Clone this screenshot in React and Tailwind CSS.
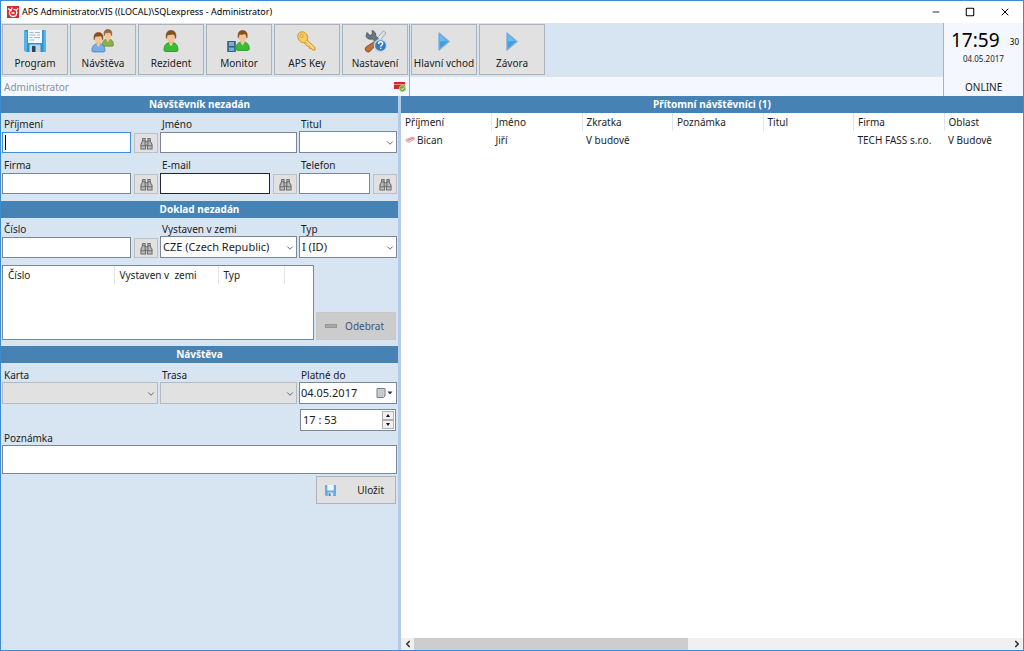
import React, { useState } from 'react';
import { ChevronDown, ChevronLeft, ChevronRight, Minus, Square, X } from 'lucide-react';

const FloppyIcon = ({ className }) => (
  <svg viewBox="0 0 22 22" className={className}>
    <path d="M0 1.5Q0 0 1.5 0h19Q22 0 22 1.500V22H2L0 20Z" fill="#2f93d3" />
    <path d="M0 1.500h3V22H2L0 20ZM19.500 0H22V22h-2.500Z" fill="#55b4e6" />
    <path d="M4 0h14v13H4Z" fill="#f4fafd" />
    <path d="M5.500 2.500h4M11 2.500h5M5.500 5h6M13 5h3M5.500 7.500h3M10 7.500h6M5.500 10h5" stroke="#a4b3bf" />
    <path d="M5.500 14.500h11V22h-11Z" fill="#c9d3db" />
    <path d="M8 16h3.500v6H8Z" fill="#2c4660" />
  </svg>
);

const SmallFloppyIcon = ({ className }) => (
  <svg viewBox="0 0 12 12" className={className}>
    <path d="M0 0h12v12H1l-1-1Z" fill="#62aee0" />
    <path d="M2.500 0h7v6h-7Z" fill="#eef7fc" />
    <path d="M3 8h6v4H3Z" fill="#d4e2ec" />
    <path d="M4 9h2v3H4Z" fill="#4682ae" />
  </svg>
);

const Person = ({ shirt, edge, hair = '#87501f' }) => (
  <>
    <path d="M1 20c0-5 2.500-7.500 7-7.500s7 2.500 7 7.500q0 1.500-2 1.500H3Q1 21.500 1 20Z" fill={shirt} stroke={edge} strokeWidth="0.8" />
    <path d="m5.500 12.500 2.500 4 2.500-4Z" fill="#f4c99b" />
    <ellipse cx="8" cy="7.500" rx="4" ry="5.300" fill="#f3c596" />
    <path d="M3.400 8.500C2.500 3 4.500.5 8 .5s5.800 2.500 4.600 8c-.4-2.500-1.500-4-2.600-4.500-2 .8-4 .8-5 .5-.8 1-1.200 2-1.600 4Z" fill={hair} stroke="#6b3d14" strokeWidth="0.5" />
  </>
);

const VisitorsIcon = ({ className }) => (
  <svg viewBox="0 0 24 24" className={className}>
    <g transform="translate(10.500 0) scale(.8)">
      <Person shirt="#8bb04a" edge="#5d8030" hair="#9a6a34" />
    </g>
    <g transform="translate(0 3) scale(.93)">
      <Person shirt="#77aee8" edge="#3d78bd" />
    </g>
  </svg>
);

const ResidentIcon = ({ className }) => (
  <svg viewBox="-4 -1 24 24" className={className}>
    <Person shirt="#35bf31" edge="#1f8c20" />
  </svg>
);

const MonitorIcon = ({ className }) => (
  <svg viewBox="0 0 24 24" className={className}>
    <g transform="translate(8 1) scale(.95)">
      <Person shirt="#35bf31" edge="#1f8c20" />
    </g>
    <path d="M0 12h9v11H0Z" fill="#3c5870" />
    <path d="M2 13h5v4H2ZM2 18.500h5V22H2Z" fill="#6fb1e3" />
    <path d="M.8 12.500V23M8.200 12.500V23" stroke="#b9cbd8" strokeWidth="0.8" strokeDasharray="1 1" />
  </svg>
);

const KeyIcon = ({ className }) => (
  <svg viewBox="0 0 24 24" className={className}>
    <g stroke="#c98d1c" strokeWidth="0.9" fill="#f9ca5c">
      <path d="m11 10 9 8.500v2.500h-2.500l-1.500-1.800-1.600.3-.2-2-1.800-.2L8.500 13Z" />
      <path fillRule="evenodd" d="M4.500 3.500C7 2 10.500 3 12 6s.5 6-1.500 7.200C8 14.500 5 13 3.600 10.500S2.500 5 4.500 3.500Zm1.300 2c-1 .8-.8 2 .1 2.500s2 0 2.300-1S7 4.800 5.800 5.500Z" />
    </g>
    <path d="m11 12 8 7.500" stroke="#fdebb0" />
  </svg>
);

const ToolsIcon = ({ className }) => (
  <svg viewBox="0 0 24 24" className={className}>
    <path d="m20.500 2 2.500 2-6.500 8-3-2.500Z" fill="#dce3e9" stroke="#8999a6" strokeWidth="0.8" />
    <path d="m10.500 13 3 2.500-6.500 7q-2 1.500-4-.5t0-4Z" fill="#bb7239" stroke="#814518" strokeWidth="0.8" />
    <path d="M4 3.500 7 6.500 9.500 5 9 1.500q4 1 3.800 5.500L20 15l-2.500 3L9.500 10Q5 11 3 7.500Z" fill="#68747e" stroke="#47525b" strokeWidth="0.8" />
    <circle cx="17.500" cy="16.500" r="6" fill="#3878be" stroke="#bcd7ef" strokeWidth="1.300" />
    <path d="M15.500 15q0-2.200 2.100-2.200t2.100 1.800c0 1.500-2 1.400-2 3.100m0 1v1.300" fill="none" stroke="#fff" strokeWidth="1.400" />
  </svg>
);

const PlayIcon = ({ className }) => (
  <svg viewBox="0 0 24 24" className={className}>
    <path d="M7 4v17l10-8.500Z" fill="#3f9fe0" stroke="#83add0" strokeWidth="1.400" strokeLinejoin="round" />
    <path d="M7.800 5.500v7L15 12Z" fill="#66bbf0" />
  </svg>
);

const BinocularsIcon = () => (
  <svg viewBox="0 0 14 14" className="w-[13px] h-[13px]">
    <g fill="#bdbdbd" stroke="#6c6c6c" strokeWidth="1.100">
      <path d="M3 1.500h2.500v3L6 6v7H1V8l1.500-3.500ZM8.500 1.500H11v3L13 8v5H8V6l.5-1.500Z" />
      <path d="M5.500 5h3v4h-3ZM1 9.500h5M8 9.500h5M2.500 4h3M8.500 4h3" />
    </g>
  </svg>
);

const AppLogo = () => (
  <svg viewBox="0 0 12 12" className="w-3 h-3">
    <path d="M0 0h12v12H0Z" fill="#d5282f" />
    <path d="M3 4.500C1.500 8 3 10.500 6 10.500S10.500 8 9.500 5M1 2.500l3 2 1-3M6.500 3l3 1.500L11 2M4.500 7h3" fill="none" stroke="#fff" strokeWidth="1.300" />
  </svg>
);

const CardStatusIcon = () => (
  <svg viewBox="0 0 12 10" className="w-3 h-2.5">
    <path d="M0 0h11v7H0Z" fill="#d8242c" />
    <path d="M0 2.500h11" stroke="#f08a8a" />
    <circle cx="8.500" cy="6.500" r="3.200" fill="#69ac2b" stroke="#d8ecc0" strokeWidth="0.6" />
    <path d="m7 6.500 1.200 1.200L10 5.500" fill="none" stroke="#fff" />
  </svg>
);

const PassIcon = () => (
  <svg viewBox="0 0 11 9" className="w-[11px] h-[9px] shrink-0">
    <path d="M1 3.500 7 1l2.500 1v1.300L4 6.500 1 5Z" fill="#f7dcdc" stroke="#d98c90" strokeWidth="0.7" />
    <path d="m2.500 4.500 6-2.500" stroke="#c9474c" strokeWidth="0.8" />
  </svg>
);

const mainActions = [
  { label: 'Program', Icon: FloppyIcon, size: 'w-[22px] h-[22px]' },
  { label: 'Návštěva', Icon: VisitorsIcon, size: 'w-6 h-6' },
  { label: 'Rezident', Icon: ResidentIcon, size: 'w-6 h-6' },
  { label: 'Monitor', Icon: MonitorIcon, size: 'w-6 h-6' },
  { label: 'APS Key', Icon: KeyIcon, size: 'w-6 h-6' },
  { label: 'Nastavení', Icon: ToolsIcon, size: 'w-6 h-6' },
];

const doorActions = [
  { label: 'Hlavní vchod', Icon: PlayIcon, size: 'w-6 h-6' },
  { label: 'Závora', Icon: PlayIcon, size: 'w-6 h-6' },
];

const visitorColumns = ['Příjmení', 'Jméno', 'Zkratka', 'Poznámka', 'Titul', 'Firma', 'Oblast'];

const visitors = [['Bican', 'Jiří', 'V budově', '', '', 'TECH FASS s.r.o.', 'V Budově']];

const ToolButton = ({ label, Icon, size }) => (
  <button
    type="button"
    className="w-[66px] h-[51px] flex flex-col items-center justify-between pt-1 pb-1 bg-[#e1e1e1] border border-[#adb2b8] whitespace-nowrap"
  >
    <span className="h-6 flex items-center">
      <Icon className={size} />
    </span>
    <span className="text-[10px] leading-[14px]">{label}</span>
  </button>
);

const SectionHeader = ({ children }) => (
  <h2 className="h-[17px] shrink-0 bg-[#4682b4] text-white text-[10px] leading-[17px] font-bold text-center">
    {children}
  </h2>
);

const Field = ({ label, id, children }) => (
  <div className="flex flex-col min-w-0">
    <label htmlFor={id} className="h-[18px] pt-1 pl-0.5 text-[10px] leading-[14px]">
      {label}
    </label>
    <div className="h-[22px] flex items-end gap-[3px]">{children}</div>
  </div>
);

const TextInput = ({ className = 'border-[#7a8896]', ...props }) => (
  <input
    type="text"
    className={`h-[21px] w-full min-w-0 flex-1 bg-white border px-[3px] text-[11px] outline-none ${className}`}
    {...props}
  />
);

const SearchButton = ({ label }) => (
  <button
    type="button"
    aria-label={label}
    className="w-6 h-5 shrink-0 flex items-center justify-center bg-[#e1e1e1] border border-[#bcbfc3]"
  >
    <BinocularsIcon />
  </button>
);

const SelectBox = ({ id, options = [], disabled = false }) => (
  <div className="relative flex-1 min-w-0">
    <select
      id={id}
      disabled={disabled}
      className="block w-full h-[22px] appearance-none bg-white border border-[#7a8896] pl-0.5 pr-3 text-[11px] outline-none disabled:bg-[#e1e1e1] disabled:border-[#b3bac2] disabled:opacity-100"
    >
      {options.map((option) => (
        <option key={option}>{option}</option>
      ))}
    </select>
    <ChevronDown className="absolute right-0.5 top-[7px] w-2.5 h-2.5 text-[#505050] pointer-events-none" />
  </div>
);

const VisitorForm = () => {
  const [surname, setSurname] = useState('');
  const [date, setDate] = useState('04.05.2017');
  const [time, setTime] = useState('17 : 53');

  const rowClass = 'grid grid-cols-[156px_137px_98px] gap-x-0.5 gap-y-px px-px';

  return (
    <form className="w-[397px] shrink-0 bg-[#d7e4f2]" onSubmit={(e) => e.preventDefault()}>
      <SectionHeader>Návštěvník nezadán</SectionHeader>
      <div className={`${rowClass} pb-[7px]`}>
        <Field label="Příjmení" id="surname">
          <div className="relative flex flex-1">
            <TextInput
              id="surname"
              value={surname}
              onChange={(e) => setSurname(e.target.value)}
              className="border-[#3c8ee0]"
            />
            {surname === '' && <span className="absolute left-[3px] top-[3px] w-px h-[15px] bg-black" />}
          </div>
          <SearchButton label="Hledat příjmení" />
        </Field>
        <Field label="Jméno" id="firstname">
          <TextInput id="firstname" />
        </Field>
        <Field label="Titul" id="title">
          <SelectBox id="title" />
        </Field>
        <Field label="Firma" id="company">
          <TextInput id="company" />
          <SearchButton label="Hledat firmu" />
        </Field>
        <Field label="E-mail" id="email">
          <TextInput id="email" className="border-[#23262e]" />
          <SearchButton label="Hledat e-mail" />
        </Field>
        <Field label="Telefon" id="phone">
          <TextInput id="phone" />
          <SearchButton label="Hledat telefon" />
        </Field>
      </div>

      <SectionHeader>Doklad nezadán</SectionHeader>
      <div className={rowClass}>
        <Field label="Číslo" id="docnumber">
          <TextInput id="docnumber" />
          <SearchButton label="Hledat doklad" />
        </Field>
        <Field label="Vystaven v zemi" id="country">
          <SelectBox id="country" options={['CZE (Czech Republic)']} />
        </Field>
        <Field label="Typ" id="doctype">
          <SelectBox id="doctype" options={['I (ID)']} />
        </Field>
      </div>
      <div className="flex items-end justify-between pl-px pr-0.5 pt-[7px] pb-1.5">
        <div className="w-[312px] h-[75px] bg-white border border-[#7a8896]">
          <table className="w-full table-fixed text-[10px] leading-[18px]">
            <thead>
              <tr className="text-left whitespace-pre">
                <th className="w-[111px] px-[5px] font-normal border-r border-[#e2e6ea]">Číslo</th>
                <th className="w-[104px] px-[5px] font-normal border-r border-[#e2e6ea]">{'Vystaven v  zemi'}</th>
                <th className="w-[66px] px-[5px] font-normal border-r border-[#e2e6ea]">Typ</th>
                <th />
              </tr>
            </thead>
          </table>
        </div>
        <button
          type="button"
          disabled
          className="w-20 h-7 pl-2 pr-[11px] flex items-center justify-between bg-[#cccccc] border border-[#c6c8ca] text-[#3d567d] text-[10px]"
        >
          <span className="w-3 h-1 bg-[#a8a8a8] border border-[#969696]" />
          Odebrat
        </button>
      </div>

      <SectionHeader>Návštěva</SectionHeader>
      <div className={`${rowClass} pt-px`}>
        <Field label="Karta" id="card">
          <SelectBox id="card" disabled />
        </Field>
        <Field label="Trasa" id="route">
          <SelectBox id="route" disabled />
        </Field>
        <Field label="Platné do" id="date">
          <div className="flex flex-1 items-center h-[22px] bg-white border border-[#7a8896] pl-px pr-[3px]">
            <input
              id="date"
              value={date}
              onChange={(e) => setDate(e.target.value)}
              className="w-full min-w-0 flex-1 text-[11px] outline-none"
            />
            <button type="button" aria-label="Otevřít kalendář" className="flex items-center">
              <svg viewBox="0 0 17 10" className="w-[17px] h-2.5">
                <path d="M1 .5h8V8L7.500 9.500H1Z" fill="#cfd2d6" stroke="#777b82" />
                <path d="M1 2.500h8M1 5h8M1 7.500h6M3.700 2v7M6.300 2v7" stroke="#bbbec3" strokeWidth="0.5" />
                <path d="M11.500 3.500h5L14 6.500Z" fill="#333" />
              </svg>
            </button>
          </div>
        </Field>
      </div>
      <div className="flex justify-end pt-[5px] pr-0.5">
        <div className="w-24 h-[22px] flex items-center justify-between bg-white border border-[#7a8896] pl-0.5 pr-px">
          <input
            aria-label="Platné do, čas"
            value={time}
            onChange={(e) => setTime(e.target.value)}
            className="w-16 text-[11px] outline-none"
          />
          <div className="flex flex-col">
            <button
              type="button"
              aria-label="Zvýšit"
              className="w-3 h-[9px] flex items-center justify-center bg-[#f0f0f0] border border-[#b0b0b0]"
            >
              <svg viewBox="0 0 4 3" className="w-1 h-[3px]">
                <path d="M0 3h4L2 0Z" fill="#111" />
              </svg>
            </button>
            <button
              type="button"
              aria-label="Snížit"
              className="w-3 h-[9px] flex items-center justify-center bg-[#f0f0f0] border border-[#b0b0b0]"
            >
              <svg viewBox="0 0 4 3" className="w-1 h-[3px]">
                <path d="M0 0h4L2 3Z" fill="#111" />
              </svg>
            </button>
          </div>
        </div>
      </div>
      <div className="flex flex-col pl-px pr-px">
        <label htmlFor="note" className="h-3.5 pl-0.5 text-[10px] leading-[14px]">
          Poznámka
        </label>
        <textarea id="note" className="h-[29px] bg-white border border-[#7a8896] px-[3px] text-[11px] resize-none outline-none" />
      </div>
      <div className="flex justify-end pt-0.5 pr-0.5">
        <button
          type="submit"
          className="w-20 h-7 pl-2 pr-[11px] flex items-center justify-between bg-[#e1e1e1] border border-[#adb2b8] text-[10px]"
        >
          <SmallFloppyIcon className="w-[11px] h-[11px]" />
          Uložit
        </button>
      </div>
    </form>
  );
};

const VisitorList = () => (
  <section className="flex-1 min-w-0 flex flex-col bg-white">
    <SectionHeader>Přítomní návštěvníci (1)</SectionHeader>
    <div className="flex-1 overflow-hidden">
      <table className="w-[634px] table-fixed text-[10px] leading-[18px]">
        <thead>
          <tr className="text-left">
            {visitorColumns.map((column) => (
              <th key={column} className="pl-1 font-normal border-r border-[#e2e6ea]">
                {column}
              </th>
            ))}
          </tr>
        </thead>
        <tbody>
          {visitors.map((visitor) => (
            <tr key={visitor[0]}>
              {visitor.map((value, index) => (
                <td key={index} className="pl-1 whitespace-nowrap">
                  {index === 0 ? (
                    <span className="flex items-center gap-px">
                      <PassIcon />
                      {value}
                    </span>
                  ) : (
                    value
                  )}
                </td>
              ))}
            </tr>
          ))}
        </tbody>
      </table>
    </div>
    <div className="h-3 flex items-stretch bg-[#f0f0f0]">
      <button type="button" aria-label="Posunout vlevo" className="w-[13px] flex items-center justify-center">
        <ChevronLeft className="w-2.5 h-2.5 text-[#333]" strokeWidth={4} />
      </button>
      <div className="flex-1">
        <div className="w-[46%] h-full bg-[#cdcdcd]" />
      </div>
      <button type="button" aria-label="Posunout vpravo" className="w-[13px] flex items-center justify-center">
        <ChevronRight className="w-2.5 h-2.5 text-[#333]" strokeWidth={4} />
      </button>
    </div>
  </section>
);

const App = () => (
  <div className="min-h-screen flex flex-col bg-white border border-[#3f8bd0] text-[#1c1c24] font-['Noto_Sans','Open_Sans',sans-serif]">
    <header className="h-[22px] shrink-0 flex items-center pl-1.5 pr-3">
      <AppLogo />
      <h1 className="ml-[3px] flex-1 text-[9px] leading-[14px] text-black">
        APS Administrator.VIS ((LOCAL)\SQLexpress - Administrator)
      </h1>
      <div className="flex items-center gap-6 text-black">
        <button type="button" aria-label="Minimalizovat">
          <Minus className="w-2.5 h-2.5" strokeWidth={2} />
        </button>
        <button type="button" aria-label="Maximalizovat">
          <Square className="w-2.5 h-2.5" strokeWidth={2.5} />
        </button>
        <button type="button" aria-label="Zavřít">
          <X className="w-3 h-3" strokeWidth={2} />
        </button>
      </div>
    </header>

    <div className="h-[73px] shrink-0 flex">
      <div className="flex-1 flex flex-col">
        <nav className="h-[54px] flex items-start pt-px bg-[#d7e4f2]">
          <div className="w-[409px] h-full flex items-start gap-0.5 pl-px border-r border-[#8fadd4]">
            {mainActions.map((action) => (
              <ToolButton key={action.label} {...action} />
            ))}
          </div>
          <div className="flex items-start gap-0.5 pl-px">
            {doorActions.map((action) => (
              <ToolButton key={action.label} {...action} />
            ))}
          </div>
        </nav>
        <div className="flex-1 bg-[#f4f7fd]">
          <div className="w-[409px] h-full flex items-center justify-between pl-[3px] pr-[3px] border-r border-[#8fadd4]">
            <span className="text-[10px] leading-[14px] text-[#8a929c]">Administrator</span>
            <CardStatusIcon />
          </div>
        </div>
      </div>
      <aside className="w-20 flex flex-col bg-[#f4f7fd] border-l border-[#9db4d6] pl-[7px] pr-1">
        <div className="flex items-center justify-between pt-1 text-black">
          <span className="text-[19px] leading-[26px]">17:59</span>
          <span className="pt-1 text-[8px] leading-[14px]">30</span>
        </div>
        <span className="pl-3 text-[8px] leading-3">04.05.2017</span>
        <span className="mt-auto pb-0.5 pl-3.5 text-[10px] leading-[14px]">ONLINE</span>
      </aside>
    </div>

    <main className="flex-1 flex">
      <VisitorForm />
      <div className="w-[3px] shrink-0 bg-[#b3cae8]" />
      <VisitorList />
    </main>
  </div>
);

export default App;
